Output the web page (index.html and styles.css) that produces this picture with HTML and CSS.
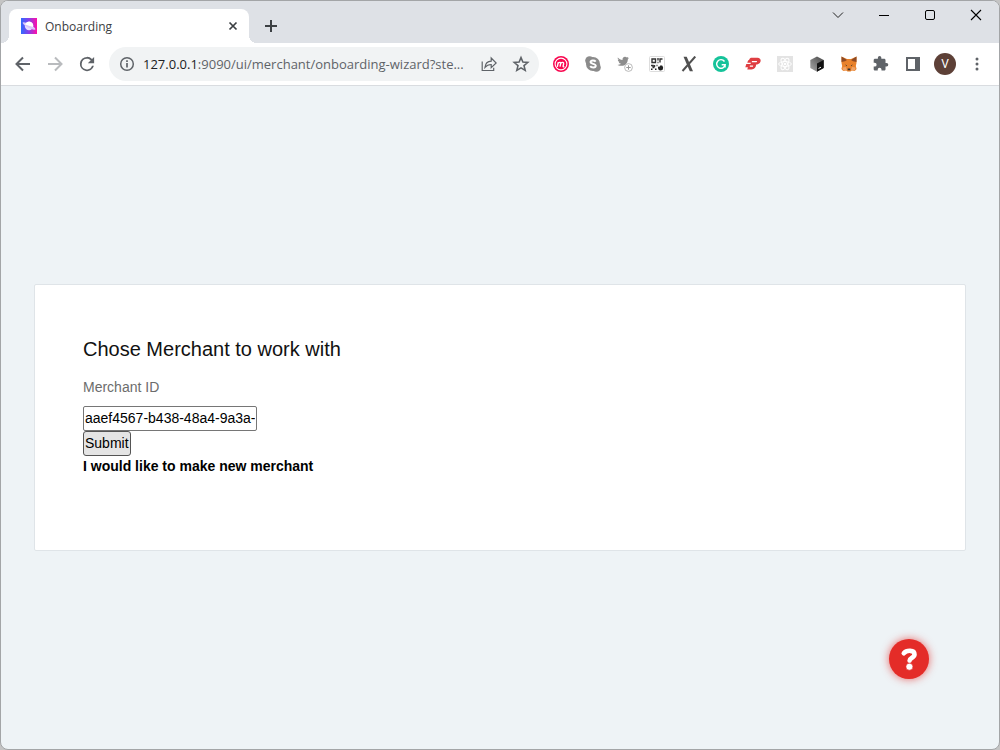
FILE: index.html
```html
<!DOCTYPE html>
<html lang="en">
<head>
<meta charset="utf-8">
<title>Onboarding</title>
<link rel="stylesheet" href="styles.css">
</head>
<body>
<div class="window">
  <header class="tabstrip">
    <div class="tab">
      <svg class="favicon" width="16" height="16" viewBox="0 0 16 16"><defs><linearGradient id="fav" x1="0" y1="0" x2="1" y2="0"><stop offset="0" stop-color="#2f6bff"/><stop offset=".5" stop-color="#8a3de8"/><stop offset="1" stop-color="#ff10a8"/></linearGradient></defs><path fill="url(#fav)" d="M0 0h16v16H0z"/><circle cx="8" cy="8" r="4.200" fill="#e6dcff"/><ellipse cx="8" cy="8" rx="7.200" ry="1.700" transform="rotate(28 8 8)" fill="#d9c4fb"/><path d="M4.100 6.400a4.200 4.200 0 0 1 8 2.600z" fill="#fff"/></svg>
      <span class="tab-title">Onboarding</span>
      <button class="tab-close" aria-label="Close tab"><svg width="10" height="10" viewBox="0 0 10 10"><path d="M1.500 1.500l7 7m0-7l-7 7" stroke="#3c4043" stroke-width="1.700"/></svg></button>
    </div>
    <button class="new-tab" aria-label="New tab"><svg width="14" height="14" viewBox="0 0 14 14"><path d="M7 1v12M1 7h12" stroke="#3c4043" stroke-width="2"/></svg></button>
    <div class="controls">
      <button aria-label="Search tabs"><svg width="12" height="12" viewBox="0 0 12 12"><path d="M1 3.500l5 5 5-5" fill="none" stroke="#222"/></svg></button>
      <button aria-label="Minimize"><svg width="12" height="12" viewBox="0 0 12 12"><path d="M1 6.500h10" stroke="#000"/></svg></button>
      <button aria-label="Maximize"><svg width="12" height="12" viewBox="0 0 12 12"><rect x="1.500" y="1.500" width="9" height="9" rx="1.500" fill="none" stroke="#000"/></svg></button>
      <button aria-label="Close"><svg width="12" height="12" viewBox="0 0 12 12"><path d="M1 1l10 10m0-10L1 11" stroke="#000" stroke-width="1.100"/></svg></button>
    </div>
  </header>
  <nav class="toolbar">
    <button aria-label="Back"><svg width="20" height="20" viewBox="0 0 20 20"><path d="M17 10H4M10 3.500L3.500 10l6.500 6.500" fill="none" stroke="#5f6368" stroke-width="2"/></svg></button>
    <button aria-label="Forward"><svg width="20" height="20" viewBox="0 0 20 20"><path d="M3 10h13M10 3.500L16.500 10 10 16.500" fill="none" stroke="#b9bbbe" stroke-width="2"/></svg></button>
    <button aria-label="Reload"><svg width="20" height="20" viewBox="0 0 24 24"><path fill="#5f6368" d="M18.700 5.300A9.400 9.400 0 0 0 12 2.500 9.500 9.500 0 1 0 21.200 14.400H18.700A7.100 7.100 0 1 1 12 4.900c2 0 3.700.8 5 2.100l-3.900 3.900H21.500V2.500z" transform="translate(1.200 1.200) scale(.9)"/></svg></button>
    <div class="omnibox">
      <svg width="16" height="16" viewBox="0 0 16 16"><circle cx="8" cy="8" r="6.300" fill="none" stroke="#5f6368" stroke-width="1.500"/><path d="M8 7v4.500M8 4.200v1.700" stroke="#5f6368" stroke-width="1.700"/></svg>
      <span class="url"><span class="host">127.0.0.1</span>:9090/ui/merchant/onboarding-wizard?ste...</span>
      <button aria-label="Share"><svg width="16" height="16" viewBox="0 0 16 16"><path d="M1.200 5.500v9h11.500v-2.800M4 11.400c.4-4 2.500-6 6.200-6.200V2l5 5-5 4.600V8.500C7.500 8.500 5.700 9.300 4 11.400z" fill="none" stroke="#5f6368" stroke-width="1.200"/></svg></button>
      <button aria-label="Bookmark"><svg width="18" height="18" viewBox="0 0 24 24"><path d="M12 3.500l2.500 6 6.500.5-5 4.200 1.600 6.300L12 17.100l-5.600 3.400L8 14.200 3 10l6.500-.5z" fill="none" stroke="#5f6368" stroke-width="2.100"/></svg></button>
    </div>
    <div class="extensions">
      <button aria-label="Extension M"><svg width="16" height="16" viewBox="0 0 16 16"><circle cx="8" cy="8" r="8" fill="#f9074f"/><circle cx="8" cy="8" r="5.900" fill="none" stroke="#fff" stroke-width="1.100"/><path d="M4.300 10.800l1-4.600M5.200 7.200c1.500-1.500 2.800-.9 2.400.7l-.6 2.700M7.600 7.400c1.600-1.700 3.400-1.200 3 .6l-.5 2.100c-.1.800.6.900 1.200.3" fill="none" stroke="#fff" stroke-width="1.400"/></svg></button>
      <button aria-label="Skype"><svg width="16" height="16" viewBox="0 0 16 16"><g fill="#8b8b8b"><circle cx="8" cy="8" r="7"/><circle cx="4.600" cy="4.600" r="4.400"/><circle cx="11.400" cy="11.400" r="4.400"/></g><path d="M10.700 5.600C9.500 4 5.300 4.100 5.500 6.200c.2 2 5.300 1.200 5.300 3.500 0 2.200-4.300 2.300-5.600.4" fill="none" stroke="#fff" stroke-width="1.900"/></svg></button>
      <button aria-label="Twitter"><svg width="16" height="16" viewBox="0 0 16 16"><path fill="#8d8d8d" d="M.8 1.600c1.300 1.600 2.800 2.400 4.700 2.500C5.200 2.200 6.400.8 8 .8c.8 0 1.400.3 1.800.8l1.600-.6-.7 1.400 1.300-.3-1.200 1.300C10.700 8.100 6.500 11.500.5 8.900c1.400 0 2.500-.3 3.500-1.100-1.100-.1-1.800-.7-2.200-1.700h1C1.600 5.500.9 4.800.8 3.700l1 .3C.9 3.200.5 2.500.8 1.600z"/><circle cx="11.500" cy="11.500" r="3.900" fill="#fff" stroke="#aaa" stroke-width=".8"/><path d="M11.500 9.300v4.400M9.300 11.500h4.400" stroke="#999"/></svg></button>
      <button aria-label="QR code"><svg width="16" height="16" viewBox="0 0 16 16"><rect x=".5" y=".5" width="15" height="15" rx="1" fill="#fff" stroke="#ddd"/><path d="M3 3h3.500v3.500H3zM9 2v2.500M11 6.500V3h2.500M8.500 6.500h1M2 9.500h2v1.500M5.500 9v2M3.500 11.500h2M7.500 9.500h1" fill="none" stroke="#333" stroke-width="1.400"/><path d="M9 10.500c1 .6 2 .2 2.500-1.200a2.600 2.600 0 1 1-2.500 3zM2 12.500h1.500V14H2zM6 12.500h1.500V14H6z" fill="#222"/></svg></button>
      <button aria-label="Extension X"><svg width="16" height="16" viewBox="0 0 16 16"><path d="M2.500.8h3.200l6.300 14.500H8.800z" fill="#505050"/><path d="M14.300.5L1.500 15" stroke="#505050" stroke-width="2"/></svg></button>
      <button aria-label="Grammarly"><svg width="16" height="16" viewBox="0 0 16 16"><circle cx="8" cy="8" r="8" fill="#15c39a"/><path d="M11.500 5.500A4.300 4.300 0 1 0 12.200 8.700H8.700M12.100 8.700v2.800" fill="none" stroke="#fff" stroke-width="1.400"/></svg></button>
      <button aria-label="Express VPN"><svg width="16" height="16" viewBox="0 0 16 16"><path d="M4 4.200C4.500 2.300 5.500 1.700 7 1.700h5.600c4.200 0 4.100 5.800-.4 6.900h-1c-.3 2.900-1.700 4.900-4.700 4.900H2.300l.6-2.200H.3L1.300 8h4.200l.4-1.300H2.300l.8-2.500z" fill="#df3e42"/><path d="M7 5h4.500c1 0 .8 1.200-.2 1.200H6.700zM5 9.600h3.200l-.3 1.100H4.700z" fill="#fff"/></svg></button>
      <button aria-label="React tools"><svg width="16" height="16" viewBox="0 0 16 16"><path fill="#e3e3e3" d="M0 0h16v16H0z"/><g fill="none" stroke="#fff"><ellipse cx="8" cy="8" rx="6.300" ry="2.500"/><ellipse cx="8" cy="8" rx="6.300" ry="2.500" transform="rotate(60 8 8)"/><ellipse cx="8" cy="8" rx="6.300" ry="2.500" transform="rotate(120 8 8)"/></g><circle cx="8" cy="8" r="1.300" fill="#fff"/></svg></button>
      <button aria-label="Box"><svg width="16" height="16" viewBox="0 0 16 16"><defs><linearGradient id="box" x1="1" y1="0" x2="0" y2="1"><stop offset="0" stop-color="#444"/><stop offset="1" stop-color="#aaa"/></linearGradient></defs><path fill="url(#box)" d="M8 .5L14.700 4v8L8 15.700 1.300 12V4z"/><path fill="#111" d="M8 7.500L14.700 4v8L8 15.700z"/><path d="M9.500 12.500l2.500-1.300" stroke="#eee"/></svg></button>
      <button aria-label="MetaMask"><svg width="16" height="16" viewBox="0 0 16 16"><path fill="#e9822b" d="M.5.500L6 3h4L15.500.5V7l-.7 3 .8 3-1.800 2-3-.5-1.300 1H6.500l-1.300-1-3 .5-1.800-2 .8-3-.7-3z"/><path fill="#8d4a25" d="M.5.500L6 4 4 5.200.5 6zM15.500.5L10 4l2 1.200 3.500.8z"/><path fill="#efa56a" d="M1.500 11.500L5 11l1 3-4 .5zM14.500 11.500L11 11l-1 3 4 .5z"/><path fill="#333" d="M4 8.500l2 .8v.9zM12 8.500l-2 .8v.9zM6.700 12.500h2.600v1.800H6.700z"/></svg></button>
      <button aria-label="Extensions"><svg width="16" height="16" viewBox="1 1 23 23"><path fill="#5f6368" d="M20.500 11H19V7c0-1.100-.9-2-2-2h-4V3.500a2.500 2.500 0 0 0-5 0V5H4c-1.100 0-2 .9-2 2v3.800h1.500a2.700 2.700 0 0 1 0 5.400H2V20c0 1.100.9 2 2 2h3.800v-1.500a2.700 2.700 0 0 1 5.400 0V22H17c1.100 0 2-.9 2-2v-4h1.500a2.500 2.500 0 0 0 0-5z"/></svg></button>
      <button aria-label="Side panel"><svg width="14" height="14" viewBox="0 0 14 14"><path fill="#5f6368" fill-rule="evenodd" d="M0 0h14v14H0zM2 2v10h7V2z"/></svg></button>
      <button class="profile" aria-label="Profile"><span class="avatar">V</span></button>
      <button aria-label="Menu"><svg width="4" height="14" viewBox="0 0 4 14" fill="#5f6368"><circle cx="2" cy="2" r="1.500"/><circle cx="2" cy="7" r="1.500"/><circle cx="2" cy="12" r="1.500"/></svg></button>
    </div>
  </nav>
  <main class="page">
    <form class="card">
      <h1>Chose Merchant to work with</h1>
      <label for="merchant">Merchant ID</label>
      <input id="merchant" type="text" value="aaef4567-b438-48a4-9a3a-">
      <button class="submit" type="button">Submit</button>
      <a href="#new">I would like to make new merchant</a>
    </form>
    <button class="help" aria-label="Help"><svg width="18" height="24" viewBox="0 0 18 24"><path d="M3.800 6.200C6.500 3 14.500 2.700 14.500 7.400c0 3.300-4.700 3.200-4.900 6.200" fill="none" stroke="#fff" stroke-width="4.600" stroke-linecap="round" stroke-linejoin="round"/><circle cx="9.400" cy="19.700" r="3.500" fill="#fff" stroke="#e42c28" stroke-width=".6"/></svg></button>
  </main>
</div>
</body>
</html>
```
FILE: styles.css
```css
* { box-sizing: border-box; }
body { margin: 0; background: #c4c4c4; }
button { display: flex; align-items: center; justify-content: center; padding: 0; border: 0; background: none; }
svg { display: block; flex: none; }

.window {
  display: flex;
  flex-direction: column;
  min-height: 100vh;
  border: 1px solid #a3a5a7;
  border-radius: 8px;
  overflow: hidden;
  background: #eef3f6;
  font-family: "Open Sans", "Noto Sans", sans-serif;
}

.tabstrip { display: flex; height: 42px; padding-left: 8px; background: #dee1e6; }
.tab {
  position: relative;
  display: flex;
  align-items: center;
  gap: 8px;
  width: 240px;
  margin-top: 8px;
  padding: 0 10px 0 12px;
  border-radius: 8px 8px 0 0;
  background: #fff;
  color: #3c4043;
  font-size: 12px;
}
.tab::before, .tab::after { content: ""; position: absolute; bottom: 0; width: 8px; height: 8px; }
.tab::before { left: -8px; background: radial-gradient(circle at 0 0, #dee1e6 8px, #fff 8px); }
.tab::after { right: -8px; background: radial-gradient(circle at 100% 0, #dee1e6 8px, #fff 8px); }
.tab-title { flex: 1; }
.tab-close { width: 12px; height: 16px; }
.new-tab { width: 28px; height: 28px; margin: 11px 0 0 8px; }
.controls { display: flex; margin-left: auto; }
.controls button { width: 46px; height: 28px; }

.toolbar {
  display: flex;
  align-items: center;
  height: 43px;
  padding: 0 6px;
  border-bottom: 1px solid #d9dce0;
  background: #fff;
}
.toolbar button { width: 32px; height: 32px; flex: none; }
.omnibox {
  display: flex;
  flex: 1;
  align-items: center;
  min-width: 0;
  height: 34px;
  margin: 0 6px;
  padding: 0 2px 0 10px;
  border-radius: 17px;
  background: #f1f3f4;
}
.url {
  flex: 1;
  margin-left: 8px;
  overflow: hidden;
  white-space: nowrap;
  color: #5f6368;
  font-size: 13px;
}
.host { color: #202124; }
.extensions { display: flex; }
.avatar {
  width: 22px;
  height: 22px;
  border-radius: 50%;
  background: #5d4037;
  color: #fff;
  font: 12px/22px Roboto, sans-serif;
}

.page {
  position: relative;
  display: flex;
  flex: 1;
  flex-direction: column;
  justify-content: center;
  padding: 24px 33px;
  font-family: "Liberation Sans", Arial, sans-serif;
  font-size: 14px;
}
.card {
  display: flex;
  flex-direction: column;
  align-items: flex-start;
  padding: 48px 48px 73px;
  border: 1px solid #dfe4e8;
  border-radius: 2px;
  background: #fff;
  color: #111;
}
.card h1 { margin: 0 0 11px; font-size: 20px; font-weight: 400; line-height: 32px; }
.card label { margin-bottom: 8px; color: #6c6c6c; line-height: 22px; }
.card input {
  width: 174px;
  height: 25px;
  padding: 0 1px 1px;
  border: 1px solid #767676;
  border-radius: 2px;
  color: #000;
  font: inherit;
}
.submit {
  height: 25px;
  padding: 0 1px 1px;
  border: 1px solid #555;
  border-radius: 3px;
  background: #e5e5e5;
  color: #000;
  font: inherit;
}
.card a { color: #000; font-weight: 700; line-height: 21px; text-decoration: none; }
.help {
  position: absolute;
  right: 70px;
  bottom: 70px;
  width: 40px;
  height: 40px;
  border-radius: 50%;
  background: #e42c28;
  box-shadow: 0 0 8px rgba(228, 44, 40, .7);
}
```
